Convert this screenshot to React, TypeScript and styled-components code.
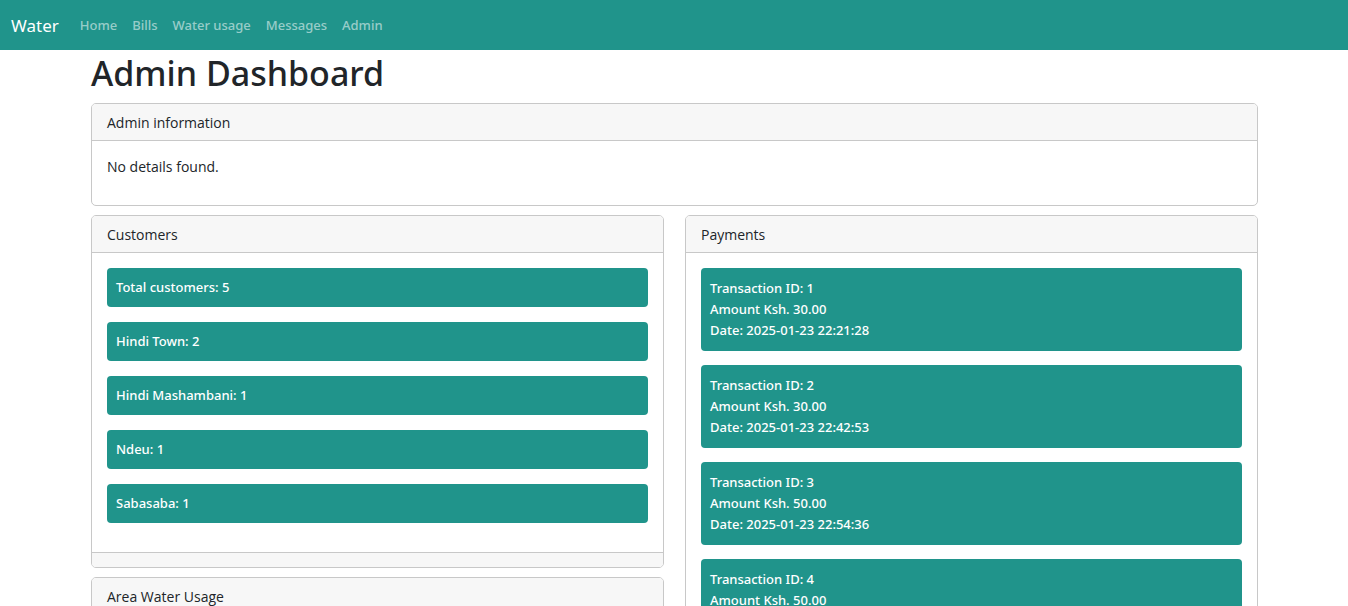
import React from "react";
import styled, { createGlobalStyle } from "styled-components";

const teal = "#20948b";
const line = "#c8c8c8";

const GlobalStyle = createGlobalStyle`
  *, *::before, *::after { box-sizing: border-box; }
  body {
    margin: 0;
    background: #fff;
    color: #212529;
    font-family: "Open Sans", "Noto Sans", sans-serif;
    font-size: 14px;
    line-height: 21px;
  }
`;

const Navbar = styled.nav`
  display: flex;
  align-items: center;
  min-height: 50px;
  padding: 0 11px;
  background: ${teal};
`;

const Brand = styled.a`
  margin-right: 14px;
  padding-top: 2px;
  color: #fff;
  font-family: "Noto Sans", sans-serif;
  font-size: 17px;
  line-height: 26px;
  text-decoration: none;
`;

const NavList = styled.ul`
  display: flex;
  gap: 1px;
  margin: 0;
  padding: 0;
  list-style: none;
`;

const NavLink = styled.a`
  display: block;
  padding: 7px;
  color: rgba(255, 255, 255, 0.55);
  font-family: "Noto Sans", sans-serif;
  font-size: 13px;
  font-weight: 500;
  text-decoration: none;
`;

const Container = styled.main`
  max-width: 1188px;
  margin: 0 auto;
  padding: 0 10px 0 11px;
`;

const Title = styled.h1`
  margin: 0 0 8px;
  padding-top: 2px;
  font-family: "Noto Sans", sans-serif;
  font-size: 34px;
  font-weight: 500;
  line-height: 43px;
`;

const Columns = styled.div`
  display: grid;
  grid-template-columns: 1fr 1fr;
  align-items: start;
  column-gap: 21px;
`;

const Card = styled.section`
  margin-bottom: 9px;
  border: 1px solid ${line};
  border-radius: 5px;
  background: #fff;
  overflow: hidden;
`;

const CardHeader = styled.header`
  padding: 8px 15px 7px;
  border-bottom: 1px solid ${line};
  background: #f7f7f7;
`;

const CardBody = styled.div`
  padding: 15px;
`;

const CardFooter = styled.footer`
  height: 15px;
  border-top: 1px solid ${line};
  background: #f7f7f7;
`;

const Message = styled.p`
  margin: 0 0 13px;
`;

const Stack = styled.ul<{ $gap: number }>`
  display: flex;
  flex-direction: column;
  gap: ${(p) => p.$gap}px;
  margin: 0 0 14px;
  padding: 0;
  list-style: none;
`;

const Bar = styled.li<{ $padY: number }>`
  padding: ${(p) => p.$padY}px 9px;
  border-radius: 4px;
  background: ${teal};
  color: #fff;
  font-family: "Noto Sans", sans-serif;
  font-size: 13px;
  font-weight: 500;
`;

const BarLine = styled.div`
  overflow-wrap: anywhere;
`;

const customers = [
  ["Total customers", 5],
  ["Hindi Town", 2],
  ["Hindi Mashambani", 1],
  ["Ndeu", 1],
  ["Sabasaba", 1],
];

const payments = [
  { id: 1, amount: "30.00", date: "2025-01-23 22:21:28" },
  { id: 2, amount: "30.00", date: "2025-01-23 22:42:53" },
  { id: 3, amount: "50.00", date: "2025-01-23 22:54:36" },
  { id: 4, amount: "50.00" },
];

export default function App() {
  return (
    <>
      <GlobalStyle />
      <Navbar>
        <Brand href="#">Water</Brand>
        <NavList>
          {["Home", "Bills", "Water usage", "Messages", "Admin"].map((item) => (
            <li key={item}>
              <NavLink href="#">{item}</NavLink>
            </li>
          ))}
        </NavList>
      </Navbar>
      <Container>
        <Title>Admin Dashboard</Title>
        <Card>
          <CardHeader>Admin information</CardHeader>
          <CardBody>
            <Message>No details found.</Message>
          </CardBody>
        </Card>
        <Columns>
          <div>
            <Card>
              <CardHeader>Customers</CardHeader>
              <CardBody>
                <Stack $gap={15}>
                  {customers.map(([name, count]) => (
                    <Bar key={name} $padY={9}>{`${name}: ${count}`}</Bar>
                  ))}
                </Stack>
              </CardBody>
              <CardFooter />
            </Card>
            <Card>
              <CardHeader>Area Water Usage</CardHeader>
            </Card>
          </div>
          <Card>
            <CardHeader>Payments</CardHeader>
            <CardBody>
              <Stack $gap={14}>
                {payments.map((p) => (
                  <Bar key={p.id} $padY={10}>
                    <BarLine>{`Transaction ID: ${p.id}`}</BarLine>
                    <BarLine>{`Amount Ksh. ${p.amount}`}</BarLine>
                    {p.date && <BarLine>{`Date: ${p.date}`}</BarLine>}
                  </Bar>
                ))}
              </Stack>
            </CardBody>
          </Card>
        </Columns>
      </Container>
    </>
  );
}
